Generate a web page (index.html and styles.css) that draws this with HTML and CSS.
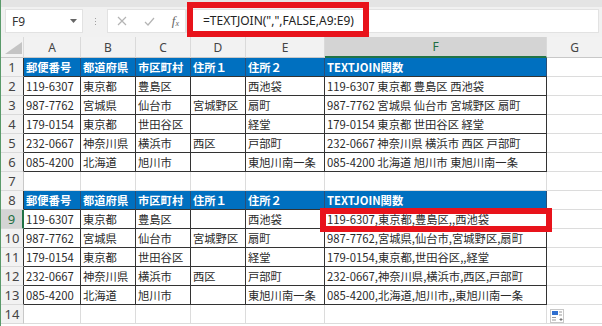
FILE: index.html
```html
<!DOCTYPE html>
<html lang="ja">
<head>
<meta charset="utf-8">
<link rel="stylesheet" href="styles.css">
</head>
<body>
<div class="app">
  <div class="topstrip"></div>
  <div class="fbar">
    <div class="namebox"><span>F9</span><svg class="caret" width="7" height="4" viewBox="0 0 7 4"><path d="M0 0h7L3.5 4z" fill="#666"/></svg></div>
    <div class="sep"><i></i><i></i><i></i></div>
    <div class="fbtns">
      <svg width="10" height="10" viewBox="0 0 10 10"><path d="M1 1l8 8M9 1l-8 8" stroke="#b4b4b4" stroke-width="1.2" fill="none"/></svg>
      <svg width="11" height="9" viewBox="0 0 11 9"><path d="M1 5l3 3 6-7" stroke="#b4b4b4" stroke-width="1.2" fill="none"/></svg>
      <span class="fx">f<sub>x</sub></span>
    </div>
    <div class="finput">=TEXTJOIN(",",FALSE,A9:E9)</div>
  </div>
  <div class="sheet">
    <div class="ch corner"><svg width="17" height="12" viewBox="0 0 17 12"><path d="M17 0V12H0z" fill="#c4c4c4"/></svg></div>
    <div class="ch">A</div><div class="ch">B</div><div class="ch">C</div><div class="ch">D</div><div class="ch">E</div><div class="ch sel">F</div><div class="ch">G</div>

    <div class="rh tb">1</div>
    <div class="c hd">郵便番号</div><div class="c hd">都道府県</div><div class="c hd">市区町村</div><div class="c hd">住所１</div><div class="c hd">住所２</div><div class="c hd">TEXTJOIN関数</div><div class="c"></div>

    <div class="rh tb">2</div>
    <div class="c t">119-6307</div><div class="c t">東京都</div><div class="c t">豊島区</div><div class="c t"></div><div class="c t">西池袋</div><div class="c t">119-6307 東京都 豊島区 西池袋</div><div class="c"></div>

    <div class="rh tb">3</div>
    <div class="c t">987-7762</div><div class="c t">宮城県</div><div class="c t">仙台市</div><div class="c t">宮城野区</div><div class="c t">扇町</div><div class="c t">987-7762 宮城県 仙台市 宮城野区 扇町</div><div class="c"></div>

    <div class="rh tb">4</div>
    <div class="c t">179-0154</div><div class="c t">東京都</div><div class="c t">世田谷区</div><div class="c t"></div><div class="c t">経堂</div><div class="c t">179-0154 東京都 世田谷区 経堂</div><div class="c"></div>

    <div class="rh tb">5</div>
    <div class="c t">232-0667</div><div class="c t">神奈川県</div><div class="c t">横浜市</div><div class="c t">西区</div><div class="c t">戸部町</div><div class="c t">232-0667 神奈川県 横浜市 西区 戸部町</div><div class="c"></div>

    <div class="rh tb">6</div>
    <div class="c t">085-4200</div><div class="c t">北海道</div><div class="c t">旭川市</div><div class="c t"></div><div class="c t">東旭川南一条</div><div class="c t">085-4200 北海道 旭川市 東旭川南一条</div><div class="c"></div>

    <div class="rh">7</div>
    <div class="c"></div><div class="c"></div><div class="c"></div><div class="c"></div><div class="c"></div><div class="c"></div><div class="c"></div>

    <div class="rh tb">8</div>
    <div class="c hd">郵便番号</div><div class="c hd">都道府県</div><div class="c hd">市区町村</div><div class="c hd">住所１</div><div class="c hd">住所２</div><div class="c hd">TEXTJOIN関数</div><div class="c"></div>

    <div class="rh tb sel">9</div>
    <div class="c t">119-6307</div><div class="c t">東京都</div><div class="c t">豊島区</div><div class="c t"></div><div class="c t">西池袋</div><div class="c t">119-6307,東京都,豊島区,,西池袋</div><div class="c"></div>

    <div class="rh tb">10</div>
    <div class="c t">987-7762</div><div class="c t">宮城県</div><div class="c t">仙台市</div><div class="c t">宮城野区</div><div class="c t">扇町</div><div class="c t">987-7762,宮城県,仙台市,宮城野区,扇町</div><div class="c"></div>

    <div class="rh tb">11</div>
    <div class="c t">179-0154</div><div class="c t">東京都</div><div class="c t">世田谷区</div><div class="c t"></div><div class="c t">経堂</div><div class="c t">179-0154,東京都,世田谷区,,経堂</div><div class="c"></div>

    <div class="rh tb">12</div>
    <div class="c t">232-0667</div><div class="c t">神奈川県</div><div class="c t">横浜市</div><div class="c t">西区</div><div class="c t">戸部町</div><div class="c t">232-0667,神奈川県,横浜市,西区,戸部町</div><div class="c"></div>

    <div class="rh tb">13</div>
    <div class="c t">085-4200</div><div class="c t">北海道</div><div class="c t">旭川市</div><div class="c t"></div><div class="c t">東旭川南一条</div><div class="c t">085-4200,北海道,旭川市,,東旭川南一条</div><div class="c"></div>

    <div class="rh">14</div>
    <div class="c"></div><div class="c"></div><div class="c"></div><div class="c"></div><div class="c"></div><div class="c"></div><div class="c"></div>
  </div>

  <div class="redbox rb-formula"></div>
  <div class="redbox rb-cell"></div>
  <svg class="qa" width="14" height="14" viewBox="0 0 14 14">
    <rect x="0.5" y="0.5" width="13" height="13" fill="#fff" stroke="#c8c8c8"/>
    <rect x="2" y="2" width="6" height="4" fill="#2f6fd0"/>
    <path d="M2 8.5h4M2 11h4M9 3h3M9 6h3" stroke="#999" stroke-width="1"/>
    <path d="M9.5 10.5h3M11 9v3" stroke="#777" stroke-width="1"/>
  </svg>
</div>
</body>
</html>
```
FILE: styles.css
```css
* { box-sizing: border-box; }
html, body { margin: 0; padding: 0; background: #fff; }
.app {
  position: relative;
  width: 602px;
  height: 326px;
  overflow: hidden;
  border-left: 1px solid #5a9a6a;
  background: #fff;
  font-family: "Noto Sans CJK JP", "Noto Sans", sans-serif;
}
.topstrip { height: 7px; background: #e4e4e4; }
.fbar {
  height: 30px;
  background: #f1f1f1;
  display: flex;
  align-items: flex-start;
  padding: 2px 3px 0 4px;
}
.namebox {
  width: 78px;
  height: 24px;
  background: #fff;
  border: 1px solid #e2e2e2;
  display: flex;
  align-items: center;
  justify-content: space-between;
  padding: 0 5px 0 6px;
  font: 12px "Noto Sans", sans-serif;
  color: #333;
}
.sep {
  width: 24px;
  height: 24px;
  display: flex;
  flex-direction: column;
  align-items: center;
  justify-content: center;
  gap: 2px;
}
.sep i { display: block; width: 1px; height: 1px; background: #a0a0a0; }
.fbtns {
  width: 79px;
  height: 24px;
  background: #fff;
  border: 1px solid #e2e2e2;
  display: flex;
  align-items: center;
  justify-content: space-between;
  padding: 0 6px 0 9px;
}
.fx {
  font: italic 13px "Liberation Serif", serif;
  color: #666;
  line-height: 1;
}
.fx sub { font-size: 8px; vertical-align: -1px; }
.finput {
  flex: 1;
  height: 24px;
  background: #fff;
  border: 1px solid #e2e2e2;
  padding-left: 16px;
  font: 12px "Noto Sans", sans-serif;
  color: #222;
  line-height: 22px;
}
.sheet {
  display: grid;
  grid-template-columns: 23px 57px 55px 55px 55px 79px 222px 56px;
  grid-template-rows: 21px repeat(14, 19px);
}
.ch {
  background: #f2f2f2;
  border-right: 1px solid #dadada;
  border-bottom: 1px solid #c8c8c8;
  font: 12px "Noto Sans", sans-serif;
  color: #444;
  display: flex;
  align-items: center;
  justify-content: center;
}
.ch.corner { align-items: flex-end; justify-content: flex-end; padding: 0 1px 3px 0; }
.ch.sel {
  background: #d4d4d4;
  color: #1e6e42;
  border-bottom: 2px solid #217346;
}
.rh {
  background: #f2f2f2;
  border-right: 1px solid #c8c8c8;
  border-bottom: 1px solid #dadada;
  font: 13px "Noto Sans", sans-serif;
  color: #444;
  display: flex;
  align-items: center;
  justify-content: center;
  line-height: 1;
}
.rh.tb { border-right-color: #333; }
.rh.sel {
  background: #d4d4d4;
  color: #1e6e42;
  border-right: 2px solid #217346;
}
.c {
  border-right: 1px solid #dcdcdc;
  border-bottom: 1px solid #dcdcdc;
  font-size: 11.3px;
  color: #2a2a2a;
  padding: 1px 0 0 2px;
  white-space: nowrap;
  overflow: visible;
  display: flex;
  align-items: center;
  line-height: 1;
}
.c.t { border-right-color: #333; border-bottom-color: #333; }
.c.hd {
  background: #0070c0;
  color: #fff;
  font-weight: bold;
  border-right: 1px solid #2a4f78;
  border-bottom: 1px solid #333;
}
.redbox {
  position: absolute;
  border: 6px solid #e8131b;
}
.rb-formula { left: 186px; top: 2px; width: 182px; height: 35px; }
.rb-cell { left: 319px; top: 208px; width: 232px; height: 24px; }
.qa { position: absolute; left: 549px; top: 309px; }
```
